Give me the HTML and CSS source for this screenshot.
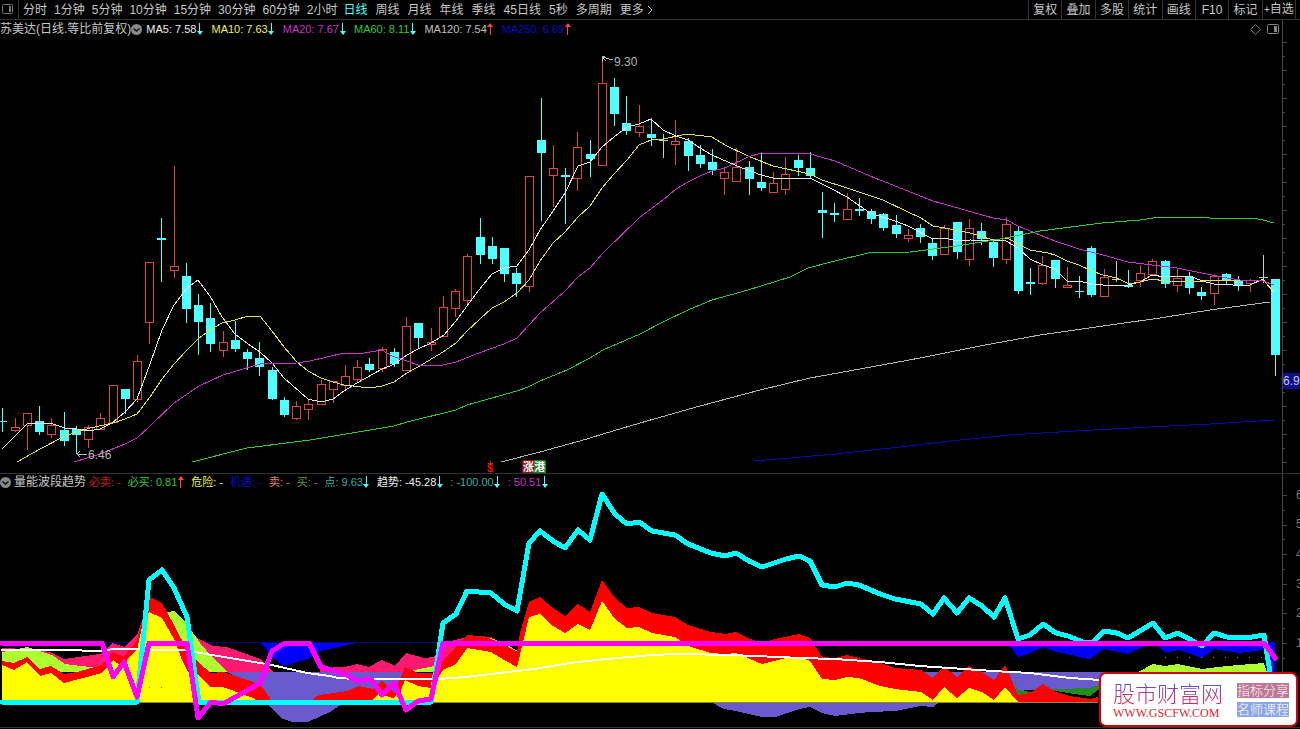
FILE: index.html
```html
<!DOCTYPE html>
<html lang="zh-CN">
<head>
    <meta charset="UTF-8">
    <meta name="viewport" content="width=device-width, initial-scale=1.0">
    <title>苏美达 日线</title>
    <link rel="stylesheet" href="styles.css">
</head>
<body>

    <header class="toolbar">
        <button class="side-btn" aria-label="侧栏">
            <svg width="12" height="11" viewBox="0 0 12 11"><rect x="0.5" y="0.5" width="10" height="9" rx="1" fill="none" stroke="#777"/><rect x="7" y="2" width="2" height="6" fill="#777"/></svg>
        </button>
        <nav class="periods">
            <button>分时</button>
            <button>1分钟</button>
            <button>5分钟</button>
            <button>10分钟</button>
            <button>15分钟</button>
            <button>30分钟</button>
            <button>60分钟</button>
            <button>2小时</button>
        </nav>
        <nav class="periods long">
            <button class="active">日线</button>
            <button>周线</button>
            <button>月线</button>
            <button>年线</button>
            <button>季线</button>
            <button>45日线</button>
            <button>5秒</button>
            <button>多周期</button>
            <button>更多<svg width="8" height="10" viewBox="0 0 8 10"><path d="M2 1L6 5L2 9" fill="none" stroke="#bbb"/></svg></button>
        </nav>
        <nav class="tools">
            <button>复权</button>
            <button>叠加</button>
            <button>多股</button>
            <button>统计</button>
            <button>画线</button>
            <button>F10</button>
            <button>标记</button>
            <button><small>+</small>自选</button>
        </nav>
    </header>

    <main>
        <!-- K线 -->
        <section class="panel">
            <div class="chart">
                <div class="info">
                    <span class="name">苏美达(日线.等比前复权)</span>
                    <button class="fold" aria-label="展开"><svg width="11" height="11" viewBox="0 0 11 11"><circle cx="5.5" cy="5.5" r="5.5" fill="#888"/><path d="M2.5 4.5L5.5 7L8.5 4.5" fill="none" stroke="#111" stroke-width="1.5"/></svg></button>
                    <span class="white">MA5: 7.58<i class="down"></i></span>
                    <span class="yellow">MA10: 7.63<i class="down"></i></span>
                    <span class="magenta">MA20: 7.67<i class="down"></i></span>
                    <span class="green">MA60: 8.11<i class="down"></i></span>
                    <span class="gray">MA120: 7.54<i class="up"></i></span>
                    <span class="blue">MA250: 6.69<i class="up"></i></span>
                    <div class="corner">
                        <svg width="11" height="11" viewBox="0 0 11 11"><path d="M5.5 0.5L10.5 5.5L5.5 10.5L0.5 5.5Z" fill="none" stroke="#777"/></svg>
                        <svg width="12" height="11" viewBox="0 0 12 11"><rect x="0.5" y="0.5" width="11" height="9" rx="1" fill="none" stroke="#888"/><rect x="7" y="2" width="3" height="6" fill="#888"/></svg>
                    </div>
                </div>
                <svg class="plot" viewBox="0 38 1282 435">
                    <g id="candles"></g>
                    <g class="ma">
                        <polyline stroke="#e6e6e6" points="2,449 27,424 40,423 53,424 65,428 77,429 88,431 100,429 112,423 125,412 137,399 150,364 162,330 174,305 187,288 198,280 210,296 222,317 235,334 248,344 260,352 272,363 284,378 308,399 321,402 333,399 344,391 357,383 382,369 395,364 407,355 418,349 431,343 444,335 456,321 467,306 479,290 492,274 504,268 517,266 529,250 540,230 553,211 565,193 578,166 590,162 602,147 614,137 627,127 639,124 651,119 663,130 676,136 688,140 700,148 712,155 737,166 761,175 773,178 810,178 830,188 847,197 870,213 895,221 908,226 933,239 945,238 957,241 970,240 1006,241 1018,248 1030,259 1043,265 1055,269 1067,281 1079,281 1092,284 1103,285 1128,285 1140,282 1152,275 1165,277 1190,276 1202,281 1214,284 1227,284 1239,286 1250,285 1263,279 1274,293"/>
                        <polyline stroke="#e0e04c" points="17,462 40,449 63,437 77,432 90,428 113,423 125,419 137,414 150,397 162,379 174,364 187,350 198,339 210,330 222,323 235,320 248,316 260,316 272,331 284,347 297,362 308,371 321,378 333,382 344,385 370,388 382,386 394,382 407,373 423,364 443,352 456,343 467,331 492,308 504,302 517,293 529,280 540,261 553,243 565,232 578,217 590,206 602,188 614,174 627,160 639,145 651,140 663,139 687,134 712,137 725,145 748,156 773,166 810,174 822,180 847,188 883,200 908,212 921,218 933,226 945,228 970,233 993,240 1007,238 1030,250 1048,253 1055,255 1067,261 1079,265 1092,271 1103,275 1117,278 1129,284 1140,282 1152,279 1165,281 1202,281 1214,280 1240,280 1263,280 1274,291"/>
                        <polyline stroke="#c832c8" points="74,462 100,454 125,444 137,438 150,426 174,403 199,386 223,375 260,364 297,363 310,361 344,353 358,354 382,350 392,356 407,361 418,365 443,365 456,362 479,353 504,344 517,338 530,324 540,313 565,291 578,277 590,268 603,253 639,218 663,200 676,189 688,182 700,176 712,171 725,168 748,157 761,153 810,154 835,161 870,176 933,201 993,218 1007,220 1018,226 1030,231 1055,241 1079,249 1103,255 1128,262 1152,265 1177,268 1202,273 1227,278 1240,280 1263,281 1274,285"/>
                        <polyline stroke="#32c832" points="192,462 247,448 310,440 370,430 394,426 407,422 456,410 467,405 492,398 517,391 528,387 540,381 567,370 590,358 603,350 640,334 663,322 688,310 712,300 748,290 790,277 808,268 835,261 868,253 910,252 957,246 1000,239 1040,231 1102,223 1140,220 1160,217 1207,217 1210,218 1253,218 1263,220 1274,223"/>
                        <polyline stroke="#b4b4b4" points="501,462 540,452 587,439 603,434 640,423 700,406 760,390 810,378 860,369 920,358 980,346 1040,335 1110,325 1160,318 1210,310 1270,302"/>
                        <polyline stroke="#0a0ab4" points="754,461 790,458 835,454 900,447 950,441 1010,435 1075,431 1150,427 1210,424 1274,420"/>
                    </g>
                    <!-- 最高 / 最低价 -->
                    <g fill="none" stroke="#bbb"><path d="M602 62V57M605 56L602 57L606 61M602 57L613 60"/><path d="M87 454H77M80 451L77 454L80 457"/></g>
                    <text class="mark" x="614" y="66">9.30</text>
                    <text class="mark" x="88" y="459">6.46</text>
                    <!-- 事件标记 -->
                    <text class="event" x="487" y="472" fill="#f01414">$</text>
                    <path d="M488 463H493M490 461V463" stroke="#f01414" fill="none"/>
                    <rect x="522" y="460" width="12" height="13" fill="#8c0f14"/>
                    <rect x="534" y="460" width="12" height="13" fill="#14821e"/>
                    <text class="event" x="523" y="471" fill="#fff">涨</text>
                    <text class="event" x="534" y="471" fill="#fff">港</text>
                </svg>
            </div>
            <svg class="axis" id="price-axis" viewBox="0 20 18 453" width="18" height="453">
                <rect x="1" y="373" width="17" height="16" fill="#0f0f8c"/>
                <text class="mark now" x="1" y="385">6.9</text>
            </svg>
        </section>

        <!-- 量能波段趋势 -->
        <section class="panel">
            <div class="chart">
                <div class="info sub">
                    <button class="fold" aria-label="展开"><svg width="11" height="11" viewBox="0 0 11 11"><circle cx="5.5" cy="5.5" r="5.5" fill="#888"/><path d="M2.5 4.5L5.5 7L8.5 4.5" fill="none" stroke="#111" stroke-width="1.5"/></svg></button>
                    <span class="name">量能波段趋势</span>
                    <span class="red">必卖: -</span>
                    <span class="green">必买: 0.81<i class="up"></i></span>
                    <span class="yellow">危险: -</span>
                    <span class="blue">机遇: -</span>
                    <span class="salmon">卖: -</span>
                    <span class="moss">买: -</span>
                    <span class="teal">点: 9.63<i class="down"></i></span>
                    <span class="white">趋势: -45.28<i class="down"></i></span>
                    <span class="teal">: -100.00<i class="down"></i></span>
                    <span class="magenta">: 50.51<i class="down"></i></span>
                </div>
                <svg class="plot" viewBox="0 490 1282 237">
                    <path d="M0 642.5H1275" stroke="#00008c"/>
                    <!-- 蓝 -->
                    <g fill="#0000ff">
                        <polygon points="261,643 272,657 284,666 308,659 320,651 334,648 356,643"/>
                        <polygon points="1008,643 1018,657 1030,653 1043,647 1056,652 1068,654 1083,658 1090,659 1104,649 1128,654 1147,645 1157,645 1165,653 1178,650 1202,658 1214,649 1239,653 1264,650 1268,643 1275,642 1275,690 1268,690 1264,643"/>
                    </g>
                    <!-- 紫 -->
                    <g fill="#6a5acd">
                        <polygon points="227,672 405,672 405,702 345,702 330,712 308,722 293,722 283,719 268,705 260,690"/>
                        <polygon points="711,702 724,709 736,711 762,717 775,717 799,709 810,707 822,713 835,716 859,713 870,712 895,711 921,706 933,707 940,702"/>
                        <polygon points="921,672 1110,672 1110,686 1090,689 1056,689 1030,690 1018,691 1005,700 921,700"/>
                    </g>
                    <polygon fill="#228b22" points="1014,678 1018,690 1030,692 1056,689 1090,688 1098,685 1110,680 1110,688 1098,690 1090,696 1074,694 1056,691 1030,694 1018,697"/>
                    <!-- 粉 -->
                    <g fill="#ff1970">
                        <polygon points="2,648 27,649 50,652 64,659 100,654 113,643 124,647 137,635 143,618 149,672 2,672"/>
                        <polygon points="187,625 193,635 199,639 213,646 227,647 260,659 272,670 273,672 187,672"/>
                        <polygon points="320,668 345,667 357,664 369,667 382,660 395,666 406,653 424,658 434,657 443,643 467,637 467,660 443,672 320,672"/>
                    </g>
                    <!-- 黄绿 -->
                    <g fill="#adff2f">
                        <polygon points="2,652 27,647 52,655 65,664 90,667 100,667 100,672 2,672"/>
                        <polygon points="160,612 168,612 174,611 187,624 200,643 213,658 227,672 170,672"/>
                        <polygon points="408,672 414,670 434,666 434,672"/>
                        <polygon points="1138,672 1153,664 1165,666 1178,664 1202,669 1227,666 1264,663 1267,672"/>
                    </g>
                    <polygon fill="#ff0000" points="2,661 14,663 27,657 40,669 51,666 64,674 77,672 102,665 113,652 124,657 137,640 143,618 150,597 162,603 174,625 187,650 198,662 211,673 223,672 260,684 270,698 271,702 310,702 315,697 320,695 347,691 359,686 373,689 382,681 394,693 405,667 418,673 431,673 438,672 443,660 456,647 467,635 491,637 517,652 520,633 529,602 540,597 553,608 565,616 578,604 590,612 602,580 615,598 627,608 639,607 652,613 675,617 688,625 711,632 725,634 736,632 750,639 762,643 775,639 799,634 810,638 822,657 835,658 847,655 880,663 895,668 921,670 933,678 944,666 957,677 969,666 982,672 994,680 1005,665 1018,695 1030,693 1043,684 1056,692 1070,696 1090,699 1098,697 1098,702 2,702"/>
                    <polygon fill="#ffff00" points="2,702 2,665 14,670 27,662 40,676 51,673 64,683 102,673 113,660 124,668 128,658 137,650 143,622 149,612 162,618 174,639 182,660 188,672 198,675 211,687 223,687 253,698 257,702 371,702 373,699 379,694 393,698 400,693 405,680 418,686 431,688 443,670 456,664 467,648 491,652 504,660 517,667 529,617 540,614 553,626 565,633 578,624 590,630 602,601 615,619 627,628 639,627 652,633 675,637 688,646 711,653 725,654 736,653 762,664 786,658 799,657 810,661 822,679 835,680 847,677 859,678 880,686 895,689 921,692 933,700 944,687 957,698 969,688 982,692 994,700 1005,687 1018,702"/>
                    <path d="M490 638L504 644L517 651" stroke="#e6d232" fill="none"/>
                    <path d="M2 702.5H1098" stroke="#8c8c32"/>
                    <path d="M149 687h1M161 687h1" stroke="#a06432"/>
                    <path d="M1165 657.5H1262" stroke="#888" stroke-dasharray="1 11"/>
                    <g class="trend">
                        <polyline stroke="#ffffff" points="2,650 63,650 100,651 113,649 187,650 200,653 272,665 307,673 330,676 338,678 356,679 438,679 466,677 499,673 534,669 570,663 606,659 652,655 677,654 731,655 802,658 834,659 880,662 920,666 993,671 1030,673 1070,678 1100,680"/>
                        <polyline stroke="#00ffff" points="2,702 137,702 149,580 162,570 174,588 187,617 199,702 431,702 443,623 456,614 467,591 491,593 504,604 517,611 529,543 540,531 553,541 565,548 578,530 590,540 602,494 615,514 627,524 639,522 652,531 675,535 688,544 711,553 725,556 736,553 749,561 762,567 786,559 799,556 810,561 822,585 835,587 847,583 859,585 880,594 895,599 921,604 933,614 944,598 957,613 969,598 982,606 994,617 1005,598 1018,639 1030,635 1043,624 1056,633 1068,636 1083,642 1092,643 1104,631 1117,633 1128,638 1153,623 1165,638 1178,633 1202,646 1214,633 1227,637 1239,638 1252,637 1264,635 1270,672 1275,702"/>
                        <polyline stroke="#ff00ff" points="2,643 102,643 113,677 124,662 137,697 149,643 187,643 198,718 211,702 223,704 248,690 260,683 272,651 285,643 309,643 321,667 345,674 357,681 371,679 382,695 394,683 406,710 418,701 431,699 443,643 1264,643 1275,658"/>
                    </g>
                </svg>
            </div>
            <svg class="axis" id="trend-axis" viewBox="0 474 18 253" width="18" height="253">
                <text class="mark" x="14" y="499">6</text>
                <text class="mark" x="14" y="528">5</text>
                <text class="mark" x="14" y="558">4</text>
                <text class="mark" x="14" y="588">3</text>
                <text class="mark" x="14" y="617">2</text>
                <text class="mark" x="14" y="647">1</text>
            </svg>
        </section>
    </main>

    <a class="site" href="#">
        <span class="brand">
            <strong>股市财富网</strong>
            <span>WWW.GSCFW.COM</span>
        </span>
        <span class="tags">
            <em class="pink-tag">指标分享</em>
            <em class="blue-tag">名师课程</em>
        </span>
    </a>

    <script src="chart.js"></script>
</body>
</html>
```
FILE: styles.css
```css
body {
    margin: 0;
    background-color: #000;
    color: #c8c8c8;
    font-family: "Liberation Sans", "Noto Sans CJK SC", sans-serif;
    font-size: 12px;
    line-height: 16px;
}
button {
    background: none;
    border: none;
    margin: 0;
    padding: 0;
    color: inherit;
    font: inherit;
    white-space: nowrap;
    cursor: pointer;
}
svg {
    display: block;
}

.toolbar {
    display: flex;
    height: 19px;
    border-bottom: 1px solid #323232;
}
.side-btn {
    width: 19px;
    padding-left: 2px;
    border-right: 1px solid #323232;
}
.periods {
    display: flex;
    gap: 7px;
    padding-left: 4px;
}
.periods.long {
    gap: 8px;
    padding-left: 6px;
}
.periods button:last-child {
    display: flex;
    align-items: center;
    gap: 2px;
}
.periods .active {
    color: #50ffff;
}
.tools {
    display: grid;
    grid-template-columns: repeat(8, 1fr);
    width: 267px;
    margin-left: auto;
    margin-right: 4px;
    border-right: 1px solid #323232;
}
.tools button {
    border-left: 1px solid #323232;
}
.tools small {
    font-size: 10px;
}

.panel {
    display: flex;
    border-bottom: 1px solid #323232;
}
.chart {
    flex: 1;
    min-width: 0;
}
.info {
    display: flex;
    align-items: center;
    height: 18px;
    gap: 8px;
    font-size: 11px;
    white-space: nowrap;
}
.info.sub {
    height: 16px;
    gap: 7px;
}
.info span {
    display: flex;
    align-items: center;
}
.info .name {
    font-size: 12px;
    margin-right: -8px;
}
.info .fold {
    margin-right: -4px;
}
.info.sub .name {
    margin-right: -4px;
}
.corner {
    display: flex;
    gap: 6px;
    margin-left: auto;
    margin-right: 3px;
}
.white { color: #f0f0f0; }
.yellow { color: #f0f050; }
.magenta { color: #c832c8; }
.green { color: #32c832; }
.gray { color: #c0c0c0; }
.blue { color: #0a0ac8; }
.red { color: #c81e1e; }
.salmon { color: #e68282; }
.moss { color: #5a9650; }
.teal { color: #3caaaa; }

/* 涨跌箭头 */
.up,
.down {
    display: flex;
    flex-direction: column;
    align-items: center;
    width: 7px;
    color: #50ffff;
}
.up {
    color: #ff4646;
    flex-direction: column-reverse;
}
.up::before,
.down::before {
    content: "";
    width: 1px;
    height: 8px;
    background-color: currentColor;
}
.up::after,
.down::after {
    content: "";
    border: 3px solid transparent;
    border-bottom: none;
    border-top: 4px solid currentColor;
}
.up::after {
    border-top: none;
    border-bottom: 4px solid currentColor;
}

.plot {
    width: 100%;
    height: auto;
    shape-rendering: crispEdges;
}
.axis {
    flex: none;
    overflow: hidden;
    shape-rendering: crispEdges;
}
.mark {
    font-size: 12px;
    fill: #b4b4b4;
}
.mark.now {
    fill: #c8c8ff;
}
#trend-axis .mark {
    fill: #787878;
}
.event {
    font-size: 11px;
    font-weight: bold;
}
.ma polyline {
    fill: none;
    stroke-width: 1px;
}
.trend polyline {
    fill: none;
    stroke-width: 5px;
    stroke-linejoin: round;
    stroke-linecap: round;
}
.trend polyline:first-child {
    stroke-width: 2px;
}

.site {
    position: absolute;
    right: 2px;
    bottom: 2px;
    display: flex;
    align-items: center;
    gap: 12px;
    padding: 4px 7px 4px 12px;
    background-color: #fff;
    border: 2px solid #d20000;
    border-radius: 7px;
    text-decoration: none;
}
.brand,
.tags {
    display: flex;
    flex-direction: column;
}
.brand {
    width: 112px;
    color: #dc2832;
    font-family: "Liberation Serif", serif;
    font-size: 12px;
    line-height: 15px;
}
.brand strong {
    font-family: "Noto Sans CJK SC", sans-serif;
    font-size: 22px;
    font-weight: 300;
    line-height: 28px;
    color: transparent;
    background: linear-gradient(#5a50dc 20%, #dc2850 80%);
    -webkit-background-clip: text;
    background-clip: text;
}
.tags {
    gap: 4px;
}
.tags em {
    color: #fff;
    font-size: 13px;
    font-style: normal;
    font-weight: 300;
    line-height: 15px;
}
.pink-tag {
    background-color: #be7896;
}
.blue-tag {
    background-color: #8ca5e6;
}
```
FILE: chart.js
```js
// 每根K线: 类型(r阳 c阴 w平), 最高, 实体上, 实体下, 最低
var bars = [
    ['c', 408, 421, 422, 432], ['r', 418, 427, 430, 432], ['r', 413, 413, 425, 450], ['c', 406, 421, 432, 435],
    ['r', 418, 425, 434, 438], ['c', 412, 430, 441, 446], ['c', 426, 429, 435, 454], ['r', 425, 427, 439, 448],
    ['r', 413, 418, 429, 429], ['r', 385, 385, 422, 422], ['c', 389, 389, 399, 414], ['r', 355, 361, 399, 402],
    ['r', 262, 262, 322, 344], ['c', 218, 238, 240, 282], ['r', 166, 266, 270, 278], ['c', 263, 276, 309, 323],
    ['c', 294, 305, 322, 355], ['c', 303, 318, 344, 352], ['r', 331, 342, 350, 357], ['c', 321, 340, 349, 352],
    ['c', 349, 352, 359, 370], ['c', 342, 358, 367, 376], ['c', 367, 370, 399, 400], ['c', 397, 400, 415, 417],
    ['r', 401, 406, 418, 420], ['r', 400, 404, 409, 420], ['r', 380, 384, 404, 405], ['r', 381, 381, 389, 403],
    ['r', 365, 376, 385, 389], ['r', 360, 367, 379, 383], ['c', 358, 364, 370, 372], ['r', 347, 349, 368, 372],
    ['c', 348, 352, 364, 367], ['r', 317, 326, 370, 370], ['c', 323, 323, 338, 349], ['r', 328, 342, 344, 351],
    ['r', 296, 307, 336, 336], ['r', 289, 291, 308, 317], ['r', 254, 256, 300, 306], ['c', 218, 237, 255, 264],
    ['c', 237, 246, 259, 264], ['c', 248, 248, 274, 282], ['c', 268, 273, 284, 297], ['r', 176, 176, 286, 292],
    ['c', 98, 140, 153, 221], ['r', 145, 168, 175, 207], ['c', 168, 175, 177, 224], ['r', 132, 147, 178, 191],
    ['c', 140, 154, 159, 177], ['r', 57, 83, 165, 165], ['c', 78, 87, 114, 126], ['c', 96, 123, 131, 135],
    ['r', 105, 126, 132, 137], ['c', 118, 134, 138, 146], ['w', 134, 140, 141, 158], ['r', 120, 141, 144, 165],
    ['c', 138, 141, 156, 171], ['c', 145, 155, 164, 168], ['c', 149, 162, 170, 175], ['r', 167, 172, 178, 195],
    ['r', 148, 167, 181, 181], ['c', 161, 167, 179, 195], ['c', 153, 182, 188, 191], ['r', 172, 183, 192, 193],
    ['r', 157, 174, 189, 195], ['c', 155, 160, 168, 176], ['c', 152, 168, 176, 179], ['c', 192, 210, 213, 238],
    ['c', 203, 213, 215, 222], ['r', 193, 209, 219, 219], ['c', 198, 209, 211, 216], ['c', 209, 211, 219, 224],
    ['c', 213, 214, 228, 231], ['c', 215, 225, 234, 238], ['r', 229, 235, 238, 242], ['c', 224, 228, 237, 243],
    ['c', 238, 243, 256, 260], ['r', 225, 228, 254, 254], ['c', 222, 222, 252, 259], ['r', 219, 228, 259, 266],
    ['c', 223, 231, 239, 245], ['c', 240, 242, 258, 267], ['r', 217, 224, 259, 264], ['c', 226, 231, 291, 294],
    ['c', 268, 282, 284, 295], ['r', 256, 265, 283, 285], ['c', 260, 260, 279, 288], ['r', 267, 285, 287, 287],
    ['c', 276, 291, 292, 298], ['c', 246, 248, 295, 297], ['r', 269, 277, 296, 296], ['w', 261, 279, 280, 282],
    ['c', 270, 285, 287, 288], ['r', 265, 273, 280, 287], ['r', 259, 261, 274, 274], ['c', 260, 261, 284, 288],
    ['r', 269, 278, 285, 292], ['c', 272, 277, 288, 294], ['c', 287, 292, 296, 300], ['r', 274, 276, 293, 305],
    ['c', 273, 274, 281, 285], ['c', 276, 281, 286, 291], ['r', 279, 280, 283, 292], ['w', 255, 277, 278, 283],
    ['c', 279, 279, 355, 376]
];
var colors = { r: '#dc4646', c: '#50ffff', w: '#c8c8c8' };

function add(parent, name, attrs) {
    var el = document.createElementNS('http://www.w3.org/2000/svg', name);
    for (var key in attrs) {
        el.setAttribute(key, attrs[key]);
    }
    parent.appendChild(el);
}

// K线
var candles = document.getElementById('candles');
bars.forEach(function(bar, i) {
    var x = Math.round(2.4 + 12.235 * i);
    var color = colors[bar[0]];
    add(candles, 'rect', { x: x, y: bar[1], width: 1, height: bar[2] - bar[1], fill: color });
    add(candles, 'rect', { x: x, y: bar[3], width: 1, height: bar[4] - bar[3], fill: color });
    if (bar[0] === 'r') {
        add(candles, 'rect', { x: x - 3.5, y: bar[2] + 0.5, width: 8, height: bar[3] - bar[2], fill: 'none', stroke: color });
    } else {
        add(candles, 'rect', { x: x - 4, y: bar[2], width: 9, height: bar[3] - bar[2], fill: color });
    }
});

// 刻度
function drawAxis(id, top, bottom, first, step, last) {
    var axis = document.getElementById(id);
    add(axis, 'rect', { x: 0, y: top, width: 1, height: bottom - top, fill: '#464646' });
    for (var n = 0, y = first; y < last; n++, y += step) {
        add(axis, 'rect', { x: 1, y: Math.round(y), width: n % 2 ? 2 : 4, height: 1, fill: '#464646' });
    }
}
drawAxis('price-axis', 20, 473, 42, 14, 470);
drawAxis('trend-axis', 474, 727, 495, 14.8, 720);
```
